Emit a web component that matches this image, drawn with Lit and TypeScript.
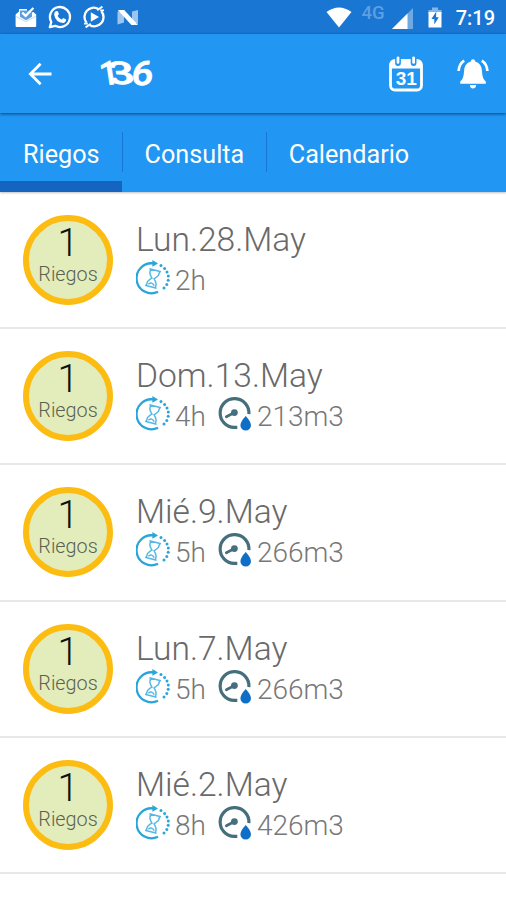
import { LitElement, html, css, svg, nothing } from "lit";
import { customElement, property } from "lit/decorators.js";

interface Watering {
  date: string;
  hours: string;
  volume?: string;
}

const WATERINGS: Watering[] = [
  { date: "Lun.28.May", hours: "2h" },
  { date: "Dom.13.May", hours: "4h", volume: "213m3" },
  { date: "Mié.9.May", hours: "5h", volume: "266m3" },
  { date: "Lun.7.May", hours: "5h", volume: "266m3" },
  { date: "Mié.2.May", hours: "8h", volume: "426m3" },
];

const mailIcon = html`<svg width="22" height="22" viewBox="0 0 22 22">
  <path d="M0.6 8.4 L4 5.6 V3 H12 V5 H6.5 V10 L11 13 L16.5 10 V6.5 L18.4 6 L21.2 8.4 V20 Q21.2 21 20 21 H1.8 Q0.6 21 0.6 20Z" fill="#fff"/>
  <path d="M5 4.5 H15 L17 8 V10.8 L11 14.2 L5 10.8Z" fill="#5c9de0"/>
  <path d="M0.8 10.3 L10.8 15.6 L21 10.3" fill="none" stroke="#a9cdf2" stroke-width="0.8"/>
  <path d="M7.2 6.6 L10.6 9.8 L18.4 2" fill="none" stroke="#fff" stroke-width="2.3"/>
</svg>`;

const phoneBubbleIcon = html`<svg width="24" height="24" viewBox="0 0 24 24">
  <path d="M1.8 22.2 L3.3 17 A10 10 0 1 1 7.2 20.8Z" fill="none" stroke="#fff" stroke-width="2.3" stroke-linejoin="round"/>
  <path d="M8 6 L9.8 6.3 L10.9 9.1 L9.6 11 Q11 13.6 13.6 14.6 L15.3 13 L18.2 14.5 Q17.8 17.8 15 17.9 Q7.6 17.4 6.1 9.4 Q6.2 6.9 8 6Z" fill="#fff"/>
</svg>`;

const syncPlayIcon = html`<svg width="24" height="24" viewBox="0 0 24 24">
  <path d="M4.6 17.8 A9.2 9.2 0 0 1 16.4 4 M19.4 6.2 A9.2 9.2 0 0 1 7.6 20" fill="none" stroke="#fff" stroke-width="2.3"/>
  <path d="M15.2 5.2 L20.4 1.6 M8.8 18.8 L3.6 22.4 M18.2 5.4 H22 M2 18.6 H5.8" stroke="#fff" stroke-width="1.9"/>
  <path d="M8.8 7.2 L17 12 L8.8 16.8Z" fill="#fff"/>
</svg>`;

const nougatIcon = html`<svg width="22" height="17" viewBox="0 0 22 17">
  <path d="M0.5 2.5 L7 2 V13.5 L0.5 15.5Z M15 2.6 L21 1 V15 L15 13Z" fill="#9cc5ef"/>
  <path d="M0.8 1 H7.2 L21 16 H14.4Z" fill="#fff"/>
</svg>`;

const wifiIcon = html`<svg width="26" height="21" viewBox="0 0 26 21">
  <path d="M0.5 5 Q13 -4.2 25.5 5 L13 20.5Z" fill="#fff"/>
</svg>`;

const signalIcon = html`<svg width="21" height="21" viewBox="0 0 21 21">
  <path d="M0 21 L21 0 V21Z" fill="#6fa9e4"/>
  <path d="M0 21 L15.5 5.5 V21Z" fill="#fff"/>
</svg>`;

const batteryIcon = html`<svg width="14" height="21" viewBox="0 0 14 21">
  <path d="M0.5 3 H4 V0.6 H10 V3 H13.5 V7 H0.5Z" fill="#83b6ea"/>
  <path d="M0.5 5 H13.5 V20.5 H0.5Z" fill="#fff"/>
  <path d="M8.3 4.5 L3.4 12 H6.3 V17.5 L10.8 10.2 H8.1Z" fill="#1976d2"/>
</svg>`;

const backIcon = html`<svg width="24" height="24" viewBox="0 0 24 24">
  <path d="M23.5 12 H3 M12.6 1.8 L2.4 12 L12.6 22.2" fill="none" stroke="#fff" stroke-width="2.8"/>
</svg>`;

const brandMark = html`<svg class="brand" width="62" height="48" viewBox="0 -3 62 48">
  <text transform="translate(5 10.5) rotate(-9)" x="-5" y="22">1</text>
  <text transform="translate(11.6 30.6) skewX(10) scale(1.42 0.95)">3</text>
  <text transform="translate(32.6 31.6) skewX(-6) scale(1.16 1.02)">6</text>
</svg>`;

const calendarIcon = html`<svg width="34" height="36" viewBox="0 0 34 36">
  <rect x="1.5" y="4.5" width="31" height="29.5" rx="4.5" fill="none" stroke="#fff" stroke-width="2.8"/>
  <path d="M1.5 12.4 V8 Q1.5 4 6 4 H28 Q32.5 4 32.5 8 V12.4Z" fill="#fff"/>
  <path d="M9 0.5 V7 M24.6 0.5 V7" stroke="#2196f3" stroke-width="5.8" stroke-linecap="round"/>
  <path d="M9 1.8 V6.4 M24.6 1.8 V6.4" stroke="#fff" stroke-width="2.8" stroke-linecap="round"/>
  <text x="17.2" y="28.6" text-anchor="middle" class="day">31</text>
</svg>`;

const bellIcon = html`<svg width="32" height="32" viewBox="0 0 32 32">
  <path d="M16 1.2 Q18 1.2 18.2 3.6 Q24.8 5.6 25 13.5 Q25.2 20.6 28.8 23.6 V25.8 H3.2 V23.6 Q6.8 20.6 7 13.5 Q7.2 5.6 13.8 3.6 Q14 1.2 16 1.2Z" fill="#fff"/>
  <path d="M12.8 27 H19.2 Q18.7 30.6 16 30.6 Q13.3 30.6 12.8 27Z" fill="#fff"/>
  <path d="M7.2 2.6 Q2 6 1.6 13 M24.8 2.6 Q30 6 30.4 13" fill="none" stroke="#fff" stroke-width="2.7"/>
</svg>`;

const hourglassIcon = html`<svg class="icon" width="34" height="36" viewBox="0 0 34 36">
  <path d="M17.6 3.4 A15 15 0 1 0 22 31.8" fill="none" stroke="#2aa5dc" stroke-width="2.3"/>
  <path d="M16.4 0 L22 3.4 L16.4 6.8Z" fill="#2aa5dc"/>
  ${[
    [25, 5.4], [28.6, 8.4], [31, 12], [32.3, 16], [32.2, 20.3], [30.8, 24.4], [28, 28],
  ].map(([x, y]) => svg`<circle cx=${x} cy=${y} r="1.5" fill="#2aa5dc"/>`)}
  <g transform="rotate(15 17 18.5)" fill="none" stroke="#55b8e4" stroke-width="1.5">
    <path d="M11 10 H23 M11 27 H23 M12.4 10 V13 Q12.4 15 15.9 18.5 Q12.4 22 12.4 24 V27 M21.6 10 V13 Q21.6 15 18.1 18.5 Q21.6 22 21.6 24 V27"/>
    <path d="M14 25 Q17 21.6 20 25"/>
  </g>
</svg>`;

const meterIcon = html`<svg class="icon" width="34" height="36" viewBox="0 0 34 36">
  <path d="M19.3 31.4 H16.2 A14.4 14.4 0 1 1 30.9 18.2" fill="none" stroke="#456f7c" stroke-width="3.2"/>
  <path d="M8.4 20.8 L16 16.8" stroke="#456f7c" stroke-width="2.8" stroke-linecap="round"/>
  <circle cx="16.4" cy="16.6" r="3.4" fill="#456f7c"/>
  <path d="M27.7 20 Q33 25.8 33 29.2 A5.3 5.2 0 0 1 22.4 29.2 Q22.4 25.8 27.7 20Z" fill="#0f6fc6"/>
</svg>`;

@customElement("status-bar")
class StatusBar extends LitElement {
  static styles = css`
    :host { display: flex; justify-content: space-between; height: 34px; background: #1976d2; color: #fff; }
    svg { display: block; }
    .group { display: flex; align-items: center; }
    .apps { padding-left: 15px; gap: 10.6px; }
    .system { padding-right: 11px; }
    .network { font: 500 18.5px/18px Roboto, sans-serif; color: #5c9fe2; margin: -8px 7px 0 10px; }
    .signal { margin: 3px 15px 0 0; }
    .battery { margin: 1px 14px 0 0; }
    .clock { font: 500 20px/24px Roboto, sans-serif; margin-top: 2px; }
  `;
  render() {
    return html`
      <div class="group apps">${mailIcon}${phoneBubbleIcon}${syncPlayIcon}${nougatIcon}</div>
      <div class="group system">
        ${wifiIcon}<span class="network">4G</span>
        <span class="signal">${signalIcon}</span>
        <span class="battery">${batteryIcon}</span>
        <span class="clock">7:19</span>
      </div>`;
  }
}

@customElement("app-toolbar")
class AppToolbar extends LitElement {
  static styles = css`
    :host { display: flex; align-items: center; height: 79px; padding: 0 17px 0 28px; box-sizing: border-box;
      background: #2196f3; box-shadow: 0 1px 3px rgba(0, 0, 0, 0.55); position: relative; }
    svg { display: block; }
    .brand { margin-left: 46px; overflow: visible; }
    .brand text { font: 500 33px Roboto, sans-serif; fill: #fff; stroke: #fff; stroke-width: 0.7px; stroke-linejoin: round; }
    .actions { display: flex; align-items: center; gap: 34px; margin-left: auto; }
    .day { font: 700 19px "Liberation Sans", sans-serif; fill: #fff; }
  `;
  render() {
    return html`${backIcon}${brandMark}
      <div class="actions">${calendarIcon}${bellIcon}</div>`;
  }
}

@customElement("app-tabs")
class AppTabs extends LitElement {
  static styles = css`
    :host { display: flex; height: 79px; background: #2196f3; color: #fff; box-shadow: 0 1px 2px rgba(0, 0, 0, 0.25); }
    .tab { display: flex; align-items: center; box-sizing: border-box; padding: 4px 22px 0 21.5px; font: 400 25.2px/30px Roboto, sans-serif; }
    .active { padding: 4px 22.6px 0 23px; box-shadow: inset 0 -11px #1565c0; }
    .divider { width: 1px; height: 40px; margin-top: 19px; background: #1976d2; }
  `;
  render() {
    return html`
      <div class="tab active">Riegos</div><div class="divider"></div>
      <div class="tab">Consulta</div><div class="divider"></div>
      <div class="tab">Calendario</div>`;
  }
}

@customElement("watering-row")
class WateringRow extends LitElement {
  @property({ attribute: false }) item!: Watering;
  static styles = css`
    :host { display: flex; align-items: center; height: 136.4px; box-sizing: border-box; padding-left: 23px; gap: 23px;
      border-bottom: 2px solid #e8e8e8; font-family: Roboto, sans-serif; font-weight: 300; }
    .badge { width: 90px; height: 90px; box-sizing: border-box; border: 6px solid #fdbc12; border-radius: 50%; background: #e3edbc;
      display: flex; flex-direction: column; align-items: center; }
    .count { font-size: 38px; line-height: 38px; color: #111; margin-top: 3px; }
    .unit { font-size: 19.8px; line-height: 22px; color: #5b604f; margin-top: 2px; }
    .info { margin-top: -4px; }
    .date { font-size: 33.6px; line-height: 40px; color: #696969; }
    .facts { display: flex; align-items: center; height: 36px; color: #777; font-size: 28px; }
    .icon { display: block; }
    .value { margin: 6px 13px 0 5px; line-height: 32px; }
    .value + .icon { margin-left: -1px; }
  `;
  render() {
    const { date, hours, volume } = this.item;
    return html`
      <div class="badge"><span class="count">1</span><span class="unit">Riegos</span></div>
      <div class="info">
        <div class="date">${date}</div>
        <div class="facts">
          ${hourglassIcon}<span class="value">${hours}</span>
          ${volume ? html`${meterIcon}<span class="value">${volume}</span>` : nothing}
        </div>
      </div>`;
  }
}

@customElement("app-root")
class AppRoot extends LitElement {
  static styles = css`
    :host { display: flex; flex-direction: column; height: 900px; overflow: hidden; background: #fff; }
    .list { display: flex; flex-direction: column; padding-top: 0.5px; }
  `;
  render() {
    return html`<status-bar></status-bar><app-toolbar></app-toolbar><app-tabs></app-tabs>
      <div class="list">${WATERINGS.map((w) => html`<watering-row .item=${w}></watering-row>`)}</div>`;
  }
}
